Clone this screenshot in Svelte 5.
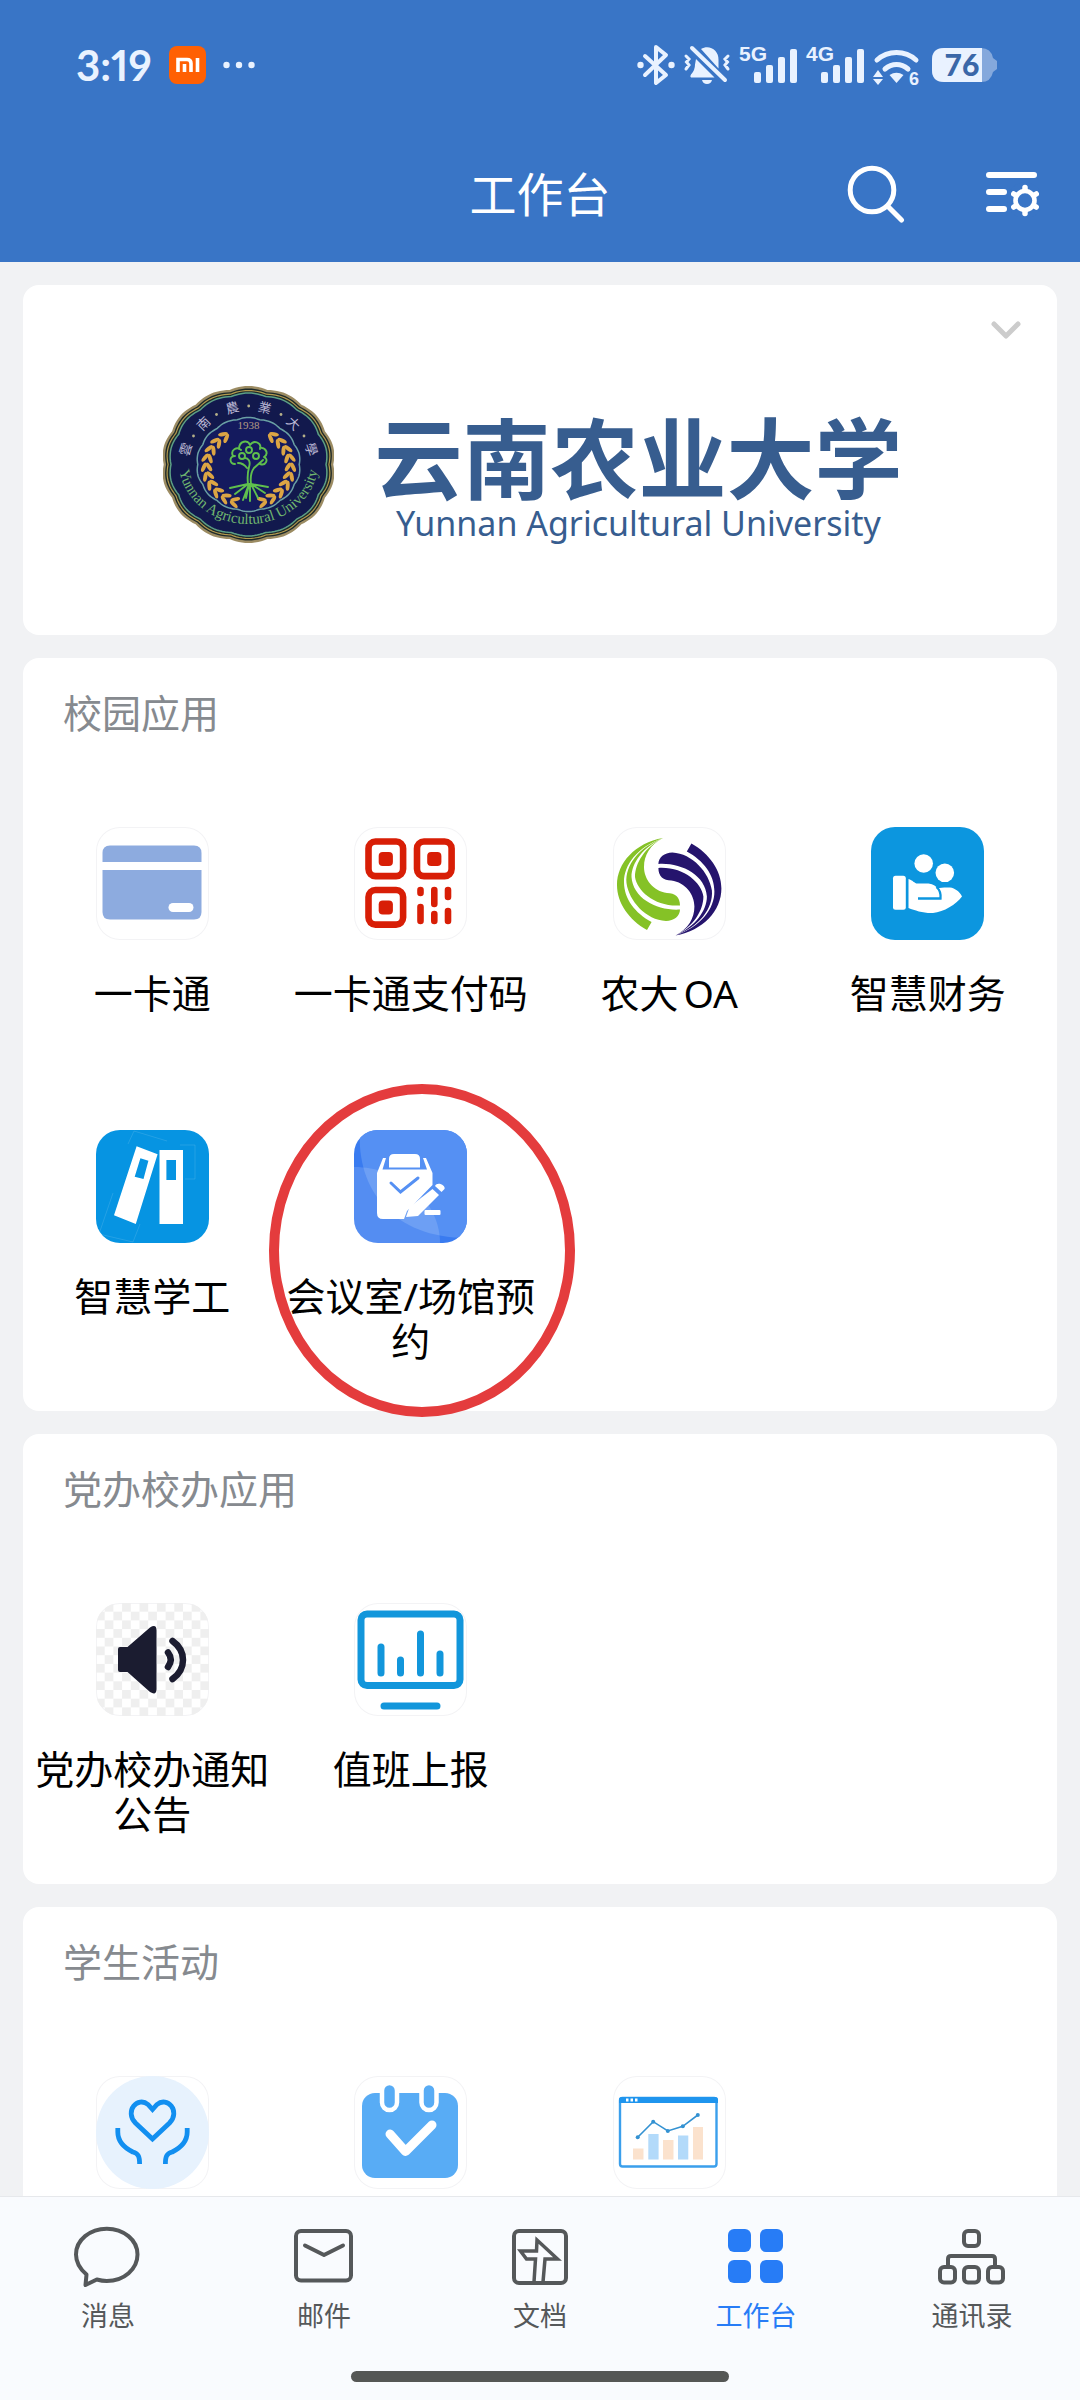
<script lang="ts">
    type App = { icon: string, label?: string, marked?: boolean, plain?: boolean };
    type Section = { title: string, apps: App[] };

    const sections: Section[] = [
        {
            title: '校园应用',
            apps: [
                {icon: 'card', label: '一卡通', plain: true},
                {icon: 'qr', label: '一卡通支付码', plain: true},
                {icon: 'oa', label: '农大OA', plain: true},
                {icon: 'finance', label: '智慧财务'},
                {icon: 'binders', label: '智慧学工'},
                {icon: 'booking', label: '会议室/场馆预约', marked: true}
            ]
        },
        {
            title: '党办校办应用',
            apps: [
                {icon: 'speaker', label: '党办校办通知公告', plain: true},
                {icon: 'monitor', label: '值班上报', plain: true}
            ]
        },
        {
            title: '学生活动',
            apps: [
                {icon: 'heart', plain: true},
                {icon: 'calendar', plain: true},
                {icon: 'chart', plain: true}
            ]
        }
    ];

    const tabs = [
        {icon: 'chat', label: '消息'},
        {icon: 'mail', label: '邮件'},
        {icon: 'docs', label: '文档'},
        {icon: 'apps', label: '工作台'},
        {icon: 'contacts', label: '通讯录'}
    ];

    let active = $state('工作台');

    // Scalloped outline of the university seal
    function scallop(rx: number, ry: number): string {
        const points: string[] = [];
        for (let i = 0; i < 168; i++) {
            const a = (i / 168) * Math.PI * 2;
            const k = 0.975 + 0.025 * Math.abs(Math.cos(a * 7));
            points.push(`${(85.5 + rx * k * Math.sin(a)).toFixed(1)} ${(78.5 - ry * k * Math.cos(a)).toFixed(1)}`);
        }
        return 'M' + points.join('L') + 'Z';
    }

    // Grains of the wheat wreath, one branch; the other is its mirror
    const grains = Array.from({length: 10}, (_, i) => {
        const deg = 128 + i * 14;
        const a = (deg * Math.PI) / 180;
        return {x: 85.5 + 42 * Math.cos(a), y: 81 - 37 * Math.sin(a), turn: -deg};
    });

    const sealChars = [
        {c: '雲', x: 22, y: 63, turn: -72},
        {c: '南', x: 40, y: 37, turn: -45},
        {c: '農', x: 69, y: 21, turn: -15},
        {c: '業', x: 102, y: 21, turn: 15},
        {c: '大', x: 131, y: 37, turn: 45},
        {c: '學', x: 149, y: 63, turn: 72}
    ];
</script>

{#snippet signal(name)}
    <svg class="signal" width="58" height="42" viewBox="0 0 58 42">
        <text x="0" y="17" font-size="21">{name}</text>
        <rect x="15" y="28" width="7" height="11" rx="2"/>
        <rect x="27" y="21" width="7" height="18" rx="2"/>
        <rect x="39" y="13" width="7" height="26" rx="2"/>
        <rect x="51" y="5" width="7" height="34" rx="2"/>
    </svg>
{/snippet}

{#snippet appIcon(name)}
    <svg viewBox="0 0 113 113">
        {#if name === 'card'}
            <g fill="#8dabdf">
                <path d="M6.500 35V26q0-7.500 7.500-7.500H98q7.500 0 7.500 7.500v9z"/>
                <path d="M6.500 43H105.500V85q0 7.500-7.500 7.500H14q-7.500 0-7.500-7.500z"/>
            </g>
            <rect x="72.500" y="76" width="25" height="9" rx="4.500" fill="#fff"/>
        {:else if name === 'qr'}
            <g fill="none" stroke="#d81e06" stroke-width="6.600">
                <rect x="14.500" y="14.500" width="34.600" height="34.600" rx="7"/>
                <rect x="63" y="14.500" width="34.600" height="34.600" rx="7"/>
                <rect x="14.500" y="63" width="34.600" height="34.600" rx="7"/>
            </g>
            <g fill="#d81e06">
                <rect x="24.700" y="25" width="14.200" height="14" rx="4"/>
                <rect x="73.200" y="25" width="14.200" height="14" rx="4"/>
                <rect x="24.700" y="73.400" width="14.200" height="14" rx="4"/>
            </g>
            <path d="M66.500 63v3M66.500 80v14M80.300 63v14M80.300 87v7M94 63v7M94 84v10" fill="none" stroke="#d81e06" stroke-width="6.600" stroke-linecap="round"/>
        {:else if name === 'oa'}
            <defs>
                <g id="oa-half">
                    <path d="M50 11C22 16 4 36 4 58c0 18 12 35 30 45l4.600-8C22 86 11 72 11 55 11 38 24 20 50 11z"/>
                    <path d="M50 11C26 20 12 38 13.500 56 16 74 33 93 53 94c8 0 14-5 14-11.500C45 84 20 72 18.500 50 18.500 36 30 20 50 11z"/>
                    <path d="M50 11C32 20 22 36 22 50c2 14 20 30 45 28.500C67 70 62 66 54 66 40 64 31 52 31 40c0-12 6-22 19-29z"/>
                </g>
            </defs>
            <use href="#oa-half" fill="#85c226"/>
            <use href="#oa-half" fill="#25146d" transform="rotate(180 56.200 59.700)"/>
        {:else if name === 'finance'}
            <rect width="113" height="113" fill="#0c96df"/>
            <g fill="#fff">
                <circle cx="52.700" cy="36.500" r="9.300"/>
                <circle cx="73.800" cy="45.800" r="9.300"/>
                <rect x="22" y="48.700" width="12.800" height="34" rx="2.500"/>
                <path d="M37.500 52c4 1 6 4.500 9 4.600h11c5 .6 8 3 9 5 3-1 8-1.200 12.500-1 5 .6 10 4.400 12 9-6 8-18 15.500-29 16.400C53 86.500 44 83.500 37.500 81z"/>
            </g>
            <path d="M47 71.500h22.500c.5-5-.5-8.500-4-11.500" fill="none" stroke="#0c96df" stroke-width="2.300"/>
        {:else if name === 'binders'}
            <rect width="113" height="113" fill="#0694e2"/>
            <path d="M32 14l6-13 33 10M17 63L3 104l34 8 7-18M84 15h15v34H89" fill="none" stroke="#fff" stroke-opacity=".12"/>
            <path fill="#fff" fill-rule="evenodd" d="M40.600 16.300l21 8-21.800 69.700L18 85.300zM44.400 28.300l-5.700 18.400 8.800 2.300 4.900-18.300zM63.500 20H87V94H63.500zM70.400 30v20H80V30z"/>
        {:else if name === 'booking'}
            <rect width="113" height="113" fill="#397bf0"/>
            <path d="M6 0C2 60 40 108 113 108V0z" fill="#5590f3"/>
            <path d="M0 37c45 0 86 33 86 76H0z" fill="#fff" opacity=".14"/>
            <g fill="#fff">
                <path d="M35 37.500V29q0-5 5-5h21q5 0 5 5v8.500z"/>
                <path d="M23 43l6-15h3l-3.500 11.500h44.500L69 28h3l6.500 15v12L53 81l-3 8H29q-6 0-6-6z"/>
                <path d="M78.500 59l6.500 6-21 21-12 1 3.500-10z"/>
                <path d="M81 56c2-5 11-1 9.500 3l-3 3z"/>
                <rect x="70.500" y="80" width="16" height="5" rx="1"/>
            </g>
            <path d="M37 53l9.500 9L64 48" fill="none" stroke="#5590f3" stroke-width="3" stroke-linecap="round"/>
        {:else if name === 'speaker'}
            <defs>
                <pattern id="checker" width="17.400" height="17.400" patternUnits="userSpaceOnUse">
                    <path d="M8.700 0h8.700v8.700H8.700zM0 8.700h8.700v8.700H0z" fill="#efefef"/>
                </pattern>
            </defs>
            <rect width="113" height="113" fill="url(#checker)"/>
            <path d="M24 44h7.500L54 24.500q6.500-4 6.500 3V86q0 7-6.500 3L31.500 69H24q-2 0-2-2V46q0-2 2-2z" fill="#1b1c30"/>
            <g fill="none" stroke="#1b1c30" stroke-width="6.500" stroke-linecap="round">
                <path d="M72 49.500q5.500 7 0 14.500"/>
                <path d="M76.500 38c14 10 14 28 0 38"/>
            </g>
        {:else if name === 'monitor'}
            <g fill="none" stroke="#1296db" stroke-width="7" stroke-linecap="round">
                <rect x="7" y="11" width="99" height="71.500" rx="6"/>
                <path d="M27 44v26M46.500 57v13M66.500 31v39M86 51v19M30 103h53"/>
            </g>
        {:else if name === 'heart'}
            <circle cx="56.500" cy="56.500" r="56.500" fill="#e7f2fd"/>
            <g fill="none" stroke="#128ff0" stroke-width="4.800">
                <path d="M56.500 63L39.500 47C28 35 42 20 52 28.500L56.500 33.500 61 28.500C71 20 85 35 73.500 47z"/>
                <path d="M21.800 52v4c0 10 7 16 15 20 6 1.500 6.800 5 6.800 12M91.200 52v4c0 10-7 16-15 20-6 1.500-6.800 5-6.800 12"/>
            </g>
        {:else if name === 'calendar'}
            <rect x="8" y="17" width="96" height="85" rx="13" fill="#58acf5"/>
            <g fill="#58acf5" stroke="#fff" stroke-width="4.500">
                <rect x="28" y="7" width="15" height="27" rx="7.500"/>
                <rect x="67.500" y="7" width="15" height="27" rx="7.500"/>
            </g>
            <path d="M36 58l15.500 17.500L78 49" fill="none" stroke="#fff" stroke-width="9" stroke-linecap="round" stroke-linejoin="round"/>
        {:else if name === 'chart'}
            <rect x="7" y="22" width="96.500" height="68.500" rx="2.500" fill="#fff" stroke="#3a9fec" stroke-width="2.400"/>
            <path d="M6 27v-3.500q0-2.500 2.500-2.500h94q2.500 0 2.500 2.500V27z" fill="#1f95ee"/>
            <path d="M13 24h2.500M17.500 24H20M22 24h2.500" stroke="#fff" stroke-width="3"/>
            <path d="M20 72.500h10.500v11H20zM50 64h10.500v19.500H50zM80 51h10v32.500H80z" fill="#fbe2cd"/>
            <path d="M35.300 58h10.300v25.500H35.300zM65 59.500h10.300v24H65z" fill="#b3dafa"/>
            <path d="M24.700 61.300l15.500-15.600L54.800 55l15-4.700 15-11.300" fill="none" stroke="#3492d2" stroke-width="1.600"/>
            <g fill="#3492d2">
                <circle cx="24.700" cy="61.300" r="2"/>
                <circle cx="40.200" cy="45.700" r="2"/>
                <circle cx="54.800" cy="55" r="2"/>
                <circle cx="69.800" cy="50.300" r="2"/>
                <circle cx="84.800" cy="39" r="2"/>
            </g>
        {/if}
    </svg>
{/snippet}

{#snippet tabIcon(name)}
    <svg width="70" height="64" viewBox="0 0 70 64" fill="none" stroke="currentColor" stroke-width="4" stroke-linejoin="round" stroke-linecap="round">
        {#if name === 'chat'}
            <path d="M13.500 49.500C7 44 3 37 3 29.500 3 15 17 3.700 33.800 3.700S64.500 15 64.500 29.500 51 56 33.800 56c-4 0-6.500-.5-10-1.500L12.500 60z"/>
        {:else if name === 'mail'}
            <rect x="7" y="6" width="55" height="49.500" rx="5"/>
            <path d="M16 20.500l19 9.500 19-9.500"/>
        {:else if name === 'docs'}
            <rect x="9" y="6" width="52" height="52" rx="5"/>
            <path stroke-width="3.500" stroke-linejoin="miter" stroke-linecap="butt" d="M29 57l1.500-23h-9l-6-8h16l.5-11 20.500 19H40l-2 23"/>
        {:else if name === 'apps'}
            <g fill="currentColor" stroke="none">
                <rect x="7" y="4" width="23" height="23" rx="6"/>
                <rect x="39" y="4" width="23" height="23" rx="6"/>
                <rect x="7" y="35" width="23" height="23" rx="6"/>
                <rect x="39" y="35" width="23" height="23" rx="6"/>
            </g>
        {:else if name === 'contacts'}
            <rect x="27" y="6" width="15" height="15" rx="4"/>
            <rect x="3" y="42" width="15" height="15.500" rx="4"/>
            <rect x="27" y="42" width="15" height="15.500" rx="4"/>
            <rect x="51" y="42" width="15" height="15.500" rx="4"/>
            <path d="M11 42v-8q0-3 3-3h41q3 0 3 3v8"/>
        {/if}
    </svg>
{/snippet}

<div class="page">
    <header>
        <div class="status">
            <div class="status-left">
                <span class="time">3:19</span>
                <svg width="37" height="38" viewBox="0 0 37 38">
                    <rect width="37" height="38" rx="8" fill="#ff6003"/>
                    <path d="M9 26V13.500h9q4 0 4 4V26M15.500 18v8M28.500 12v14" fill="none" stroke="#fff" stroke-width="3.600"/>
                </svg>
                <svg width="32" height="8" viewBox="0 0 32 8" fill="#e9f2ff">
                    <circle cx="3.500" cy="4" r="3.200"/>
                    <circle cx="16" cy="4" r="3.200"/>
                    <circle cx="28.500" cy="4" r="3.200"/>
                </svg>
            </div>
            <div class="status-right">
                <svg width="38" height="42" viewBox="0 0 38 42">
                    <path d="M8 12l21 19-10 8V3l10 8L8 31" fill="none" stroke="#e9f2ff" stroke-width="4" stroke-linejoin="round" stroke-linecap="round"/>
                    <circle cx="3.500" cy="21" r="3.200" fill="#e9f2ff"/>
                    <circle cx="34.500" cy="21" r="3.200" fill="#e9f2ff"/>
                </svg>
                <svg width="46" height="42" viewBox="0 0 46 42">
                    <g fill="#e9f2ff">
                        <path d="M12 15l18.500 18.500H7q-1.500-1 0-3 4-4 4-10zM17 5c8-5 18 1 17.500 11v8.500zM18 36h10q-1 4-5 4t-5-4z"/>
                    </g>
                    <g fill="none" stroke="#e9f2ff" stroke-linecap="round">
                        <path d="M8 4l33 32" stroke-width="4"/>
                        <path d="M2 12l3 3-2.500 3L5 21l-3 4M44 12l-3 3 2.500 3-2.500 3 3 4" stroke-width="3"/>
                    </g>
                </svg>
                {@render signal('5G')}
                {@render signal('4G')}
                <svg width="50" height="42" viewBox="0 0 50 42">
                    <g fill="none" stroke="#e9f2ff" stroke-width="5" stroke-linecap="round">
                        <path d="M4 16c11-10 28-10 39 0"/>
                        <path d="M12 25c7-6 16-6 23 0"/>
                    </g>
                    <g fill="#e9f2ff">
                        <path d="M16.500 31q7-4.500 14 0l-7 8zM0 33l5-7 5 7zM0 35h10l-5 6z"/>
                        <text x="36" y="41" font-size="18">6</text>
                    </g>
                </svg>
                <svg class="battery" width="66" height="34" viewBox="0 0 66 34">
                    <path d="M12 0h37q10 0 12 10l4 3v8l-4 3q-2 10-12 10H12Q0 34 0 22V12Q0 0 12 0z" fill="#84a8dc"/>
                    <path d="M12 0h38v34H12Q0 34 0 22V12Q0 0 12 0z" fill="#e9f2ff"/>
                    <text x="30" y="28" font-size="30" text-anchor="middle">76</text>
                </svg>
            </div>
        </div>
        <div class="toolbar">
            <h1>工作台</h1>
            <div class="actions">
                <button aria-label="搜索">
                    <svg width="58" height="58" viewBox="0 0 58 58" fill="none" stroke="#fff" stroke-width="5" stroke-linecap="round">
                        <circle cx="25" cy="25" r="21.800"/>
                        <path d="M41 41.500L54.500 55"/>
                    </svg>
                </button>
                <button aria-label="设置">
                    <svg width="56" height="46" viewBox="0 0 56 46" fill="none" stroke="#fff" stroke-linecap="round">
                        <path d="M4 4h45M4 21h15M4 38h15" stroke-width="6"/>
                        <circle cx="40" cy="29.500" r="13" fill="#3975c6" stroke="#3975c6" stroke-width="10"/>
                        <circle cx="40" cy="29.500" r="9.500" stroke-width="4.600"/>
                        <path d="M40 18.500v-2M40 40.500v2M30.500 24l-1.700-1M49.500 35l1.700 1M30.500 35l-1.700 1M49.500 24l1.700-1" stroke-width="5.500"/>
                    </svg>
                </button>
            </div>
        </div>
    </header>

    <main>
        <section class="banner">
            <svg class="seal" width="171" height="157" viewBox="0 0 171 157">
                <path d={scallop(87, 78.5)} fill="#9c8c63"/>
                <path d={scallop(84.5, 76)} fill="#1e2a2a"/>
                <path d={scallop(82.5, 74)} fill="none" stroke="#b39a4e" stroke-width="1.200"/>
                <path d={scallop(79.5, 71.5)} fill="#12194d" stroke="#5c9f86" stroke-width="1.500"/>
                <path d={scallop(52, 47)} fill="#141a5e" stroke="#6aa0a4" stroke-width="1.500"/>
                {#each sealChars as s}
                    <text class="seal-char" x={s.x} y={s.y} transform="rotate({s.turn} {s.x} {s.y})">{s.c}</text>
                {/each}
                <g fill="#b5b089">
                    <circle cx="30.500" cy="50" r="1.400"/>
                    <circle cx="53.500" cy="28.500" r="1.400"/>
                    <circle cx="85.700" cy="20" r="1.400"/>
                    <circle cx="118" cy="28.500" r="1.400"/>
                    <circle cx="141" cy="50" r="1.400"/>
                </g>
                <text class="seal-year" x="85.500" y="43">1938</text>
                <path id="seal-arc" d="M17 88A70 63 0 0 0 154 88" fill="none"/>
                <text class="seal-name"><textPath href="#seal-arc" startOffset="50%">Yunnan Agricultural University</textPath></text>
                <g id="wheat" fill="#dca544">
                    {#each grains as g}
                        <g transform="translate({g.x} {g.y}) rotate({g.turn})">
                            <ellipse cx="-3.500" cy="1" rx="2" ry="5" transform="rotate(-28)"/>
                            <ellipse cx="3.500" cy="1" rx="2" ry="5" transform="rotate(28)"/>
                        </g>
                    {/each}
                </g>
                <use href="#wheat" transform="translate(171 0) scale(-1 1)"/>
                <g fill="none" stroke="#5fbf4d" stroke-width="1.900" stroke-linecap="round">
                    <path d="M85 98c-1-8 0-13 1-17 2-6-1-9-4-9M88 98c-1-8 0-12 3-16l9-8M84 82c-3-4-6-5-9-5"/>
                    <path d="M85 98l-18 4M85 98l-13 10M86 98l-6 16M87 98v17M88 98l7 14M88 98l14 9M88 98l17 3M86 98l-3 14"/>
                    <path d="M72 78c-6 0-6-8 0-8M70 70c-3-6 4-10 8-6M76 63c0-8 9-10 11-4M87 59c4-6 12-2 10 4M97 62c6-1 9 6 4 9M101 71c5 2 2 9-4 7"/>
                    <circle cx="79" cy="70" r="3"/>
                    <circle cx="86" cy="64" r="3"/>
                    <circle cx="93" cy="70" r="3"/>
                </g>
            </svg>
            <div class="school">
                <p class="school-cn">云南农业大学</p>
                <p class="school-en">Yunnan Agricultural University</p>
            </div>
            <button class="expand" aria-label="展开">
                <svg width="30" height="19" viewBox="0 0 30 19" fill="none" stroke="#ccc" stroke-width="5" stroke-linecap="round" stroke-linejoin="round">
                    <path d="M3 3l12 12L27 3"/>
                </svg>
            </button>
        </section>

        {#each sections as section}
            <section class="card">
                <h2>{section.title}</h2>
                <div class="grid">
                    {#each section.apps as app}
                        <button class="app" class:marked={app.marked}>
                            <span class="tile" class:plain={app.plain}>{@render appIcon(app.icon)}</span>
                            {#if app.label}
                                <span class="label">{app.label}</span>
                            {/if}
                        </button>
                    {/each}
                </div>
            </section>
        {/each}
    </main>

    <footer>
        <nav>
            {#each tabs as tab}
                <button class="tab" class:active={active === tab.label} onclick={() => (active = tab.label)}>
                    {@render tabIcon(tab.icon)}
                    <span>{tab.label}</span>
                </button>
            {/each}
        </nav>
        <div class="home-bar"></div>
    </footer>
</div>

<style>
    :global(body) {
        margin: 0;
        background: #f1f2f4;
    }

    .page {
        display: flex;
        flex-direction: column;
        height: 100vh;
        font-family: "Noto Sans", "Noto Sans CJK SC", sans-serif;
        color: #000;
        text-autospace: normal;
    }

    button {
        margin: 0;
        padding: 0;
        border: none;
        background: none;
        font: inherit;
        color: inherit;
        cursor: pointer;
    }

    svg {
        display: block;
        flex: none;
    }

    h1, h2, p {
        margin: 0;
        font-weight: 400;
    }

    header {
        flex: none;
        background: #3975c6;
        color: #fff;
    }

    .status {
        display: flex;
        justify-content: space-between;
        align-items: center;
        height: 130px;
        padding: 0 82px 0 76px;
    }

    .status-left {
        display: flex;
        align-items: center;
        gap: 17px;
    }

    .status-right {
        display: flex;
        align-items: center;
        gap: 9px;
    }

    .status-right svg {
        overflow: visible;
    }

    .time {
        font-family: Lato, sans-serif;
        font-size: 42px;
        line-height: 48px;
        font-weight: 700;
        font-variant-numeric: proportional-nums;
        color: #e9f2ff;
    }

    .status-right text {
        font-family: "Liberation Sans", sans-serif;
        font-weight: 700;
    }

    .signal {
        fill: #e9f2ff;
    }

    .battery text {
        font-family: Lato, sans-serif;
        fill: #3a67a8;
        font-weight: 900;
    }

    .toolbar {
        display: grid;
        grid-template-columns: 1fr auto 1fr;
        align-items: center;
        height: 128px;
        padding: 0 39px 4px;
    }

    h1 {
        grid-column: 2;
        font-size: 47px;
        line-height: 56px;
    }

    .actions {
        display: flex;
        justify-content: flex-end;
        align-items: center;
        gap: 80px;
    }

    main {
        flex: 1;
        min-height: 0;
        display: flex;
        flex-direction: column;
        gap: 23px;
        padding: 23px;
        overflow-y: auto;
        scrollbar-width: none;
    }

    section {
        flex: none;
        position: relative;
        background: #fff;
        border-radius: 16px;
    }

    .banner {
        display: flex;
        justify-content: center;
        align-items: flex-end;
        gap: 40px;
        padding: 101px 14px 92px 0;
    }

    .school {
        text-align: center;
        color: #375d8f;
    }

    .school-cn {
        font-size: 88px;
        line-height: 90px;
        font-weight: 700;
    }

    .school-en {
        font-size: 34px;
        line-height: 40px;
    }

    .seal-char {
        font-family: "Noto Sans CJK TC", sans-serif;
        font-size: 13px;
        fill: #bdb9d6;
        text-anchor: middle;
        dominant-baseline: central;
    }

    .seal-year {
        font-family: "Liberation Serif", serif;
        font-size: 11px;
        fill: #b49a83;
        text-anchor: middle;
    }

    .seal-name {
        font-family: "Liberation Serif", serif;
        font-size: 15px;
        fill: #6fb56f;
        text-anchor: middle;
    }

    .expand {
        position: absolute;
        top: 36px;
        right: 36px;
    }

    .card {
        padding: 32px 0 47px;
    }

    h2 {
        padding: 0 40px;
        font-size: 39px;
        line-height: 45px;
        color: #868a8f;
    }

    .grid {
        display: grid;
        grid-template-columns: repeat(4, 1fr);
        grid-auto-rows: minmax(234px, auto);
        row-gap: 69px;
        padding-top: 92px;
    }

    .app {
        position: relative;
        display: flex;
        flex-direction: column;
        align-items: center;
        gap: 30px;
    }

    .tile {
        width: 113px;
        height: 113px;
        border-radius: 24px;
        overflow: hidden;
    }

    .plain {
        box-shadow: inset 0 0 0 1px #f3f3f5;
    }

    .label {
        font-size: 39px;
        line-height: 45px;
        text-align: center;
    }

    /* red ring drawn over the highlighted app */
    .marked::after {
        content: "";
        position: absolute;
        box-sizing: border-box;
        top: -46px;
        left: -13px;
        width: 306px;
        height: 333px;
        border: 10px solid #e43c3d;
        border-radius: 50%;
        pointer-events: none;
    }

    footer {
        flex: none;
        padding-bottom: 18px;
        border-top: 1px solid #e6e8eb;
        background: #f9fbfe;
    }

    nav {
        display: grid;
        grid-template-columns: repeat(5, 1fr);
        padding: 28px 0 37px;
    }

    .tab {
        display: flex;
        flex-direction: column;
        align-items: center;
        gap: 9px;
        font-size: 27px;
        line-height: 36px;
        color: #55585a;
    }

    .active {
        color: #277cf6;
    }

    .home-bar {
        width: 35%;
        height: 11px;
        margin: 0 auto;
        border-radius: 6px;
        background: #555755;
    }
</style>
